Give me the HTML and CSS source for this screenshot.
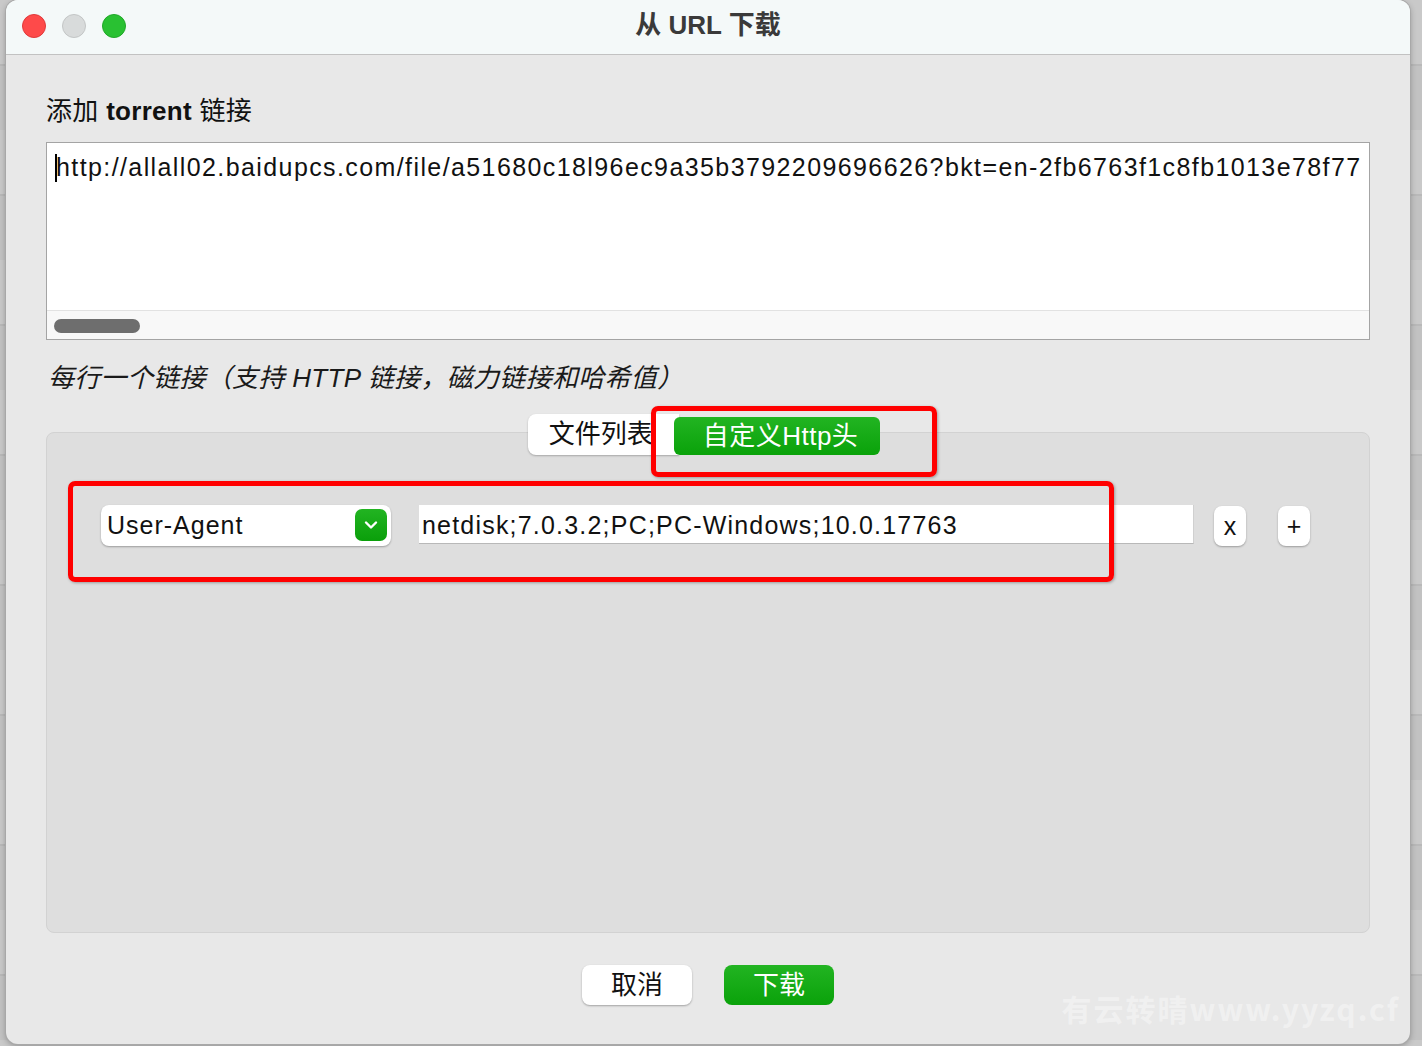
FILE: index.html
```html
<!DOCTYPE html>
<html lang="zh-CN">
<head>
    <meta charset="UTF-8">
    <meta name="viewport" content="width=device-width, initial-scale=1.0">
    <title>从 URL 下载</title>
    <link rel="stylesheet" href="styles.css">
</head>
<body>
    <!-- Dialog window -->
    <div class="window">
        <header class="titlebar">
            <div class="traffic">
                <span class="light red"></span>
                <span class="light grey"></span>
                <span class="light green"></span>
            </div>
            <div class="title">从 URL 下载</div>
        </header>

        <main class="content">
            <div class="label">添加 <b>torrent</b> 链接</div>

            <!-- Link box -->
            <div class="link-box">
                <div class="link-text">http://allall02.baidupcs.com/file/a51680c18l96ec9a35b3792209696626?bkt=en-2fb6763f1c8fb1013e78f77</div>
                <div class="hscroll">
                    <span class="thumb"></span>
                </div>
            </div>

            <div class="hint">每行一个链接（支持 HTTP 链接，磁力链接和哈希值）</div>

            <!-- Tab group -->
            <section class="group">
                <div class="tabs">
                    <div class="tab">文件列表</div>
                    <div class="tab active">自定义Http头</div>
                </div>

                <div class="header-row">
                    <div class="select">
                        <span>User-Agent</span>
                        <span class="select-arrow">
                            <svg width="14" height="10" viewBox="0 0 14 10"><path d="M2 2.5 L7 7.5 L12 2.5" fill="none" stroke="#fff" stroke-width="2.4" stroke-linecap="round" stroke-linejoin="round"/></svg>
                        </span>
                    </div>
                    <div class="value">netdisk;7.0.3.2;PC;PC-Windows;10.0.17763</div>
                    <button class="small-button remove">x</button>
                    <button class="small-button add">+</button>
                </div>

                <!-- annotation boxes -->
                <div class="mark mark-tab"></div>
                <div class="mark mark-row"></div>
            </section>

            <div class="actions">
                <button class="cancel-button">取消</button>
                <button class="download-button">下载</button>
            </div>
        </main>

        <div class="watermark">有云转晴www.yyzq.cf</div>
    </div>
</body>
</html>
```

FILE: styles.css
```css
/* General Styles */
* {
    margin: 0;
    padding: 0;
    box-sizing: border-box;
}

body {
    width: 1422px;
    height: 1046px;
    overflow: hidden;
    background: repeating-linear-gradient(180deg, #c9c9c9 0px, #c9c9c9 64px, #b9b9b9 64px, #b9b9b9 66px, #c2c2c2 66px, #c2c2c2 130px);
    font-family: "Liberation Sans", "Noto Sans CJK SC", sans-serif;
    color: #111;
}

.window {
    position: relative;
    margin-left: 6px;
    width: 1404px;
    height: 1044px;
    background: #e8e8e8;
    border-radius: 12px;
    overflow: hidden;
    box-shadow: 0 0 0 1px #a8a8a8, 0 2px 6px rgba(0, 0, 0, 0.3);
}

/* Title bar */
.titlebar {
    height: 55px;
    background: #f4f9f9;
    border-bottom: 1px solid #c2c2c2;
    display: flex;
    align-items: center;
    position: relative;
}

.traffic {
    display: flex;
    gap: 16px;
    padding-left: 16px;
    margin-top: -2px;
}

.light {
    width: 24px;
    height: 24px;
    border-radius: 50%;
    display: block;
}

.light.red {
    background: #fe4a4a;
    border: 1px solid #e0393a;
}

.light.grey {
    background: #d8dbdb;
    border: 1px solid #c3c6c6;
}

.light.green {
    background: #29c132;
    border: 1px solid #20a828;
}

.title {
    position: absolute;
    left: 0;
    right: 0;
    top: 8px;
    text-align: center;
    font-size: 26px;
    line-height: 34px;
    font-weight: bold;
    color: #3a3a3a;
    pointer-events: none;
}

/* Main content */
.content {
    padding: 40px 40px 0 40px;
}

.label {
    font-size: 26px;
    line-height: 32px;
    letter-spacing: 0.3px;
}

.label b {
    font-weight: bold;
}

.link-box {
    margin-top: 15px;
    height: 198px;
    background: #fff;
    border: 1px solid #a4a4a4;
    display: flex;
    flex-direction: column;
}

.link-text {
    flex: 1;
    padding: 7px 0 0 9px;
    font-size: 25px;
    line-height: 34px;
    letter-spacing: 1.4px;
    white-space: nowrap;
    overflow: hidden;
    position: relative;
}

.link-text::before {
    content: "";
    position: absolute;
    left: 8px;
    top: 11px;
    width: 2px;
    height: 28px;
    background: #000;
}

.hscroll {
    height: 29px;
    background: #f8f8f8;
    border-top: 1px solid #e2e2e2;
    padding: 8px 0 0 7px;
}

.thumb {
    display: block;
    width: 86px;
    height: 14px;
    border-radius: 7px;
    background: #6e6e6e;
}

.hint {
    margin-top: 22px;
    font-size: 26px;
    line-height: 32px;
    font-style: italic;
    letter-spacing: 0.3px;
    padding-left: 2px;
    color: #1a1a1a;
}

/* Group box with tabs */
.group {
    position: relative;
    margin-top: 38px;
    height: 501px;
    background: #dedede;
    border: 1px solid #d2d2d2;
    border-radius: 8px;
}

.tabs {
    display: flex;
    justify-content: center;
    align-items: flex-end;
    margin-top: -19px;
    padding-right: 8px;
}

.tab {
    height: 41px;
    padding: 0 26px 0 21px;
    background: #fff;
    border-radius: 8px 0 0 8px;
    font-size: 26px;
    line-height: 41px;
    box-shadow: 0 1px 2px rgba(0, 0, 0, 0.25);
}

.tab.active {
    height: 38px;
    line-height: 38px;
    margin-left: -5px;
    padding: 0 22px 0 29px;
    background: linear-gradient(180deg, #22b422, #0aa20a);
    color: #fff;
    border-radius: 6px;
    letter-spacing: 0.5px;
    box-shadow: none;
}

.header-row {
    display: flex;
    align-items: center;
    margin-top: 49px;
    padding-left: 54px;
}

.select {
    width: 290px;
    height: 41px;
    background: #fff;
    border-radius: 8px;
    box-shadow: 0 1px 2px rgba(0, 0, 0, 0.3);
    display: flex;
    align-items: center;
    justify-content: space-between;
    padding: 0 4px 0 6px;
    font-size: 25px;
    letter-spacing: 1px;
}

.select-arrow {
    width: 32px;
    height: 32px;
    border-radius: 7px;
    background: linear-gradient(180deg, #22b422, #0a9f0a);
    display: flex;
    align-items: center;
    justify-content: center;
}

.value {
    margin-left: 28px;
    width: 775px;
    height: 39px;
    background: #fff;
    border-bottom: 1px solid #b8b8b8;
    border-right: 1px solid #d0d0d0;
    font-size: 25px;
    line-height: 40px;
    letter-spacing: 1.2px;
    padding-left: 3px;
    margin-top: -2px;
}

.small-button {
    width: 32px;
    height: 40px;
    background: #fff;
    border: none;
    border-radius: 8px;
    box-shadow: 0 1px 2px rgba(0, 0, 0, 0.3);
    font-family: "Liberation Sans", sans-serif;
    font-size: 25px;
    color: #111;
    margin-top: 2px;
}

.remove {
    margin-left: 20px;
}

.add {
    margin-left: 32px;
}

/* Red annotation boxes */
.mark {
    position: absolute;
    border: 5px solid #ff0000;
    border-radius: 7px;
    box-shadow: 1px 1px 3px rgba(0, 0, 0, 0.3);
}

.mark-tab {
    left: 604px;
    top: -27px;
    width: 286px;
    height: 71px;
}

.mark-row {
    left: 21px;
    top: 48px;
    width: 1046px;
    height: 101px;
}

/* Bottom buttons */
.actions {
    display: flex;
    justify-content: center;
    gap: 32px;
    margin-top: 32px;
}

.actions button {
    width: 110px;
    height: 40px;
    border: none;
    border-radius: 8px;
    font-family: "Liberation Sans", "Noto Sans CJK SC", sans-serif;
    font-size: 26px;
    line-height: 38px;
}

.cancel-button {
    background: #fff;
    color: #111;
    box-shadow: 0 1px 2px rgba(0, 0, 0, 0.3);
}

.download-button {
    background: linear-gradient(180deg, #22b422, #0aa20a);
    color: #fff;
}

.watermark {
    position: absolute;
    right: 10px;
    bottom: 14px;
    font-family: "Noto Sans CJK SC", sans-serif;
    font-size: 30px;
    font-weight: bold;
    color: rgba(255, 255, 255, 0.4);
    letter-spacing: 2px;
}
```
